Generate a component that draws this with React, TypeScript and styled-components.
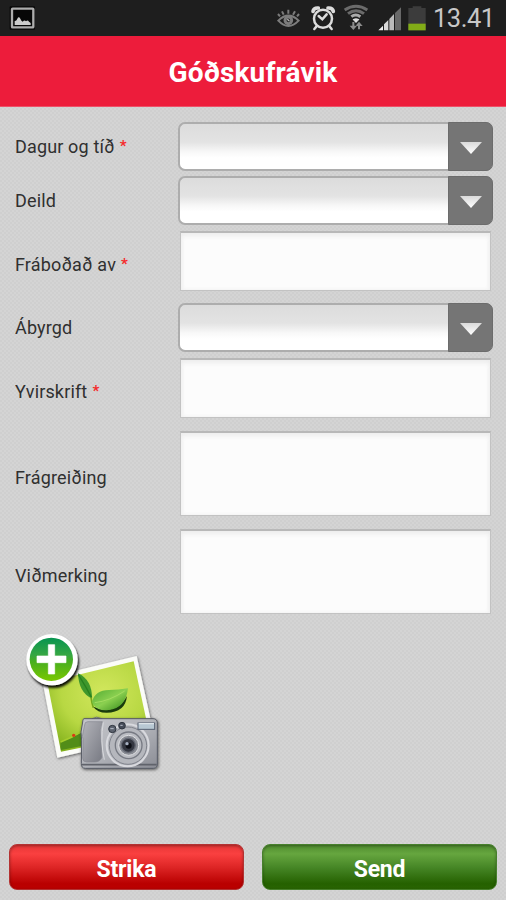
import React from 'react';
import styled, { createGlobalStyle } from 'styled-components';

const GlobalStyle = createGlobalStyle`
  * { box-sizing: border-box; }
  body { margin: 0; font-family: Roboto, sans-serif; }
`;

const Screen = styled.div`
  width: 506px;
  height: 900px;
  display: flex;
  flex-direction: column;
  overflow: hidden;
  background: repeating-conic-gradient(#d4d4d4 0 25%, #cfcfcf 0 50%) 0 0 / 4px 4px;
`;

const StatusBar = styled.div`
  height: 36px;
  flex: none;
  display: flex;
  align-items: center;
  justify-content: space-between;
  padding: 0 11px 0 9px;
  background: #1e1e1e;
`;

const StatusIcons = styled.div`
  display: flex;
  align-items: center;
`;

const Clock = styled.span`
  width: 61px;
  margin-left: 5px;
  margin-right: 1px;
  font-size: 25.5px;
  line-height: 36px;
  letter-spacing: -0.5px;
  color: #c8c8c8;
  white-space: nowrap;
`;

const Header = styled.h1`
  height: 71px;
  flex: none;
  margin: 0;
  display: flex;
  align-items: center;
  justify-content: center;
  padding-top: 3px;
  background: #ed1c3b;
  border-bottom: 1px solid #ee5068;
  color: #fff;
  font-size: 28px;
  font-weight: 700;
  letter-spacing: 0.15px;
`;

const Form = styled.form`
  flex: none;
  padding: 15px 13px 0 15px;
`;

const Row = styled.div<{ $gap: number }>`
  display: grid;
  grid-template-columns: 163px 315px;
  align-items: center;
  margin-bottom: ${(p) => p.$gap}px;
`;

const Label = styled.label<{ $drop: number }>`
  font-size: 18px;
  line-height: 22px;
  color: #303030;
  padding-top: ${(p) => p.$drop}px;
  letter-spacing: 0.15px;
`;

const Required = styled.span`
  margin-left: 5px;
  font-size: 15px;
  font-weight: 700;
  line-height: 1;
  vertical-align: 2px;
  color: #f52a2a;
`;

const Select = styled.div`
  height: 49px;
  display: flex;
  border: 2px solid #adadad;
  border-right: 0;
  border-radius: 7px;
  background: linear-gradient(#dcdcdc, #e3e3e3 40%, #f8f8f8 62%, #fff 75%);
`;

const SelectArrow = styled.div`
  width: 45px;
  margin: -2px 0 -2px auto;
  display: flex;
  align-items: center;
  justify-content: center;
  padding-top: 3px;
  border: 1px solid #6c6c6c;
  border-radius: 0 7px 7px 0;
  background: #757575;
`;

const TextBox = styled.div<{ $height: number }>`
  height: ${(p) => p.$height}px;
  margin: 0 2px;
  border: 1px solid #c2c2c2;
  border-top: 2px solid #b8b8b8;
  background: #fcfcfc;
  box-shadow: inset 0 3px 5px #ededed, inset 0 0 4px #f0f0f0;
`;

const PhotoButton = styled.div`
  width: 180px;
  height: 160px;
  margin-top: 6px;
  flex: none;
`;

const Actions = styled.div`
  margin-top: auto;
  display: grid;
  grid-template-columns: 235px 235px;
  gap: 18px;
  padding: 0 9px 10px;
`;

const ActionButton = styled.button<{ $tone: 'red' | 'green' }>`
  height: 46px;
  padding: 4px 0 0;
  border: 1px solid ${(p) => (p.$tone === 'red' ? '#b33232' : '#47802c')};
  border-radius: 8px;
  background: ${(p) =>
    p.$tone === 'red'
      ? 'linear-gradient(#e63636, #fa4040 20%, #dc2424 52%, #b90000 88%, #bc0000)'
      : 'linear-gradient(#4f8c2e, #66a63f 20%, #458525 52%, #256100 88%, #296503)'};
  box-shadow: inset 0 1px 3px rgba(0, 0, 0, 0.35), 0 0 1px #ddd;
  color: #fff;
  font: 700 23px Roboto, sans-serif;
  letter-spacing: -0.2px;
`;

const GalleryIcon = () => (
  <svg width="27" height="26" viewBox="0 0 81 78">
    <rect x="2" y="4" width="76" height="70" rx="3" fill="#070707" />
    <rect x="9" y="11" width="64" height="56" rx="2" fill="none" stroke="#adadad" strokeWidth="7" />
    <path d="M17 60V48q5 1 8-7 4-8 9 0 3 7 7 9 6-6 10-1 5-5 9 1l5 4v6z" fill="#ccc" />
  </svg>
);

const StatusGlyphs = () => (
  <svg width="162" height="36" viewBox="0 0 486 108">
    <g fill="none" stroke="#7c7c7c" strokeWidth="6">
      <path d="M37 62q30-30 61 0-31 32-61 0z" />
      <circle cx="67" cy="61" r="10" strokeWidth="9" />
      <path d="M67 29v12M48 34l5 10M87 34l-6 10M36 42l6 7M99 42l-6 7" />
      <path d="M64 58l6 5" stroke="#bbb" strokeWidth="4" />
    </g>
    <g fill="none" stroke="#dcdcdc" strokeWidth="7.5" strokeLinecap="round">
      <circle cx="171" cy="56" r="27" />
      <path d="M158 48l11 10 13-15M151 80l-6 7M191 80l6 7" />
      <path d="M141 34q2-11 16-10M186 24q14-1 16 10" strokeWidth="11" />
    </g>
    <g fill="none" stroke="#6b6b6b" strokeWidth="9">
      <path d="M236 30q34-22 68 0M246 41q24-18 48 0" />
      <path d="M256 50q13-10 27 0" stroke="#aaa" />
      <path d="M263 59q7-4 14 0l-7 7z" fill="#ddd" stroke="#ddd" strokeWidth="4" />
      <path d="M262 66v16M279 88V72" stroke="#8c8c8c" strokeWidth="6" />
      <path d="M251 77h22l-11 13zM268 78h22l-11-13z" fill="#8c8c8c" stroke="none" />
    </g>
    <path d="M337 91l14-14v14z" fill="#eee" />
    <path d="M354 91V73l13-13v31z" fill="#d8d8d8" />
    <path d="M370 91V57l14-15v49z" fill="#bbb" />
    <path d="M387 91V39l18-17v69z" fill="#686868" />
    <path d="M427 24h13v-5h26v5h13v67h-52z" fill="#3c3c3c" />
    <path d="M427 71h52v20h-52z" fill="#82ac17" />
  </svg>
);

const ArrowIcon = () => (
  <svg width="24" height="14" viewBox="0 0 24 14">
    <defs>
      <linearGradient id="arrow" x2="0" y2="1">
        <stop stopColor="#dadada" />
        <stop offset="1" stopColor="#fff" />
      </linearGradient>
    </defs>
    <path d="M1 1h22L12 13z" fill="url(#arrow)" />
  </svg>
);

const AddPhotoIcon = () => (
  <svg width="180" height="160" viewBox="0 0 540 480">
    <defs>
      <radialGradient id="photo" cx=".55" cy=".35" r=".75">
        <stop stopColor="#d2e75d" />
        <stop offset=".55" stopColor="#b8d843" />
        <stop offset="1" stopColor="#7eae18" />
      </radialGradient>
      <linearGradient id="leaf" x1="0" x2="1" y2="1">
        <stop stopColor="#50aa31" />
        <stop offset=".5" stopColor="#8bd050" />
        <stop offset="1" stopColor="#318719" />
      </linearGradient>
      <linearGradient id="badge" x2="0" y2="1">
        <stop stopColor="#079451" />
        <stop offset=".4" stopColor="#36a743" />
        <stop offset=".55" stopColor="#48ae20" />
        <stop offset="1" stopColor="#79c800" />
      </linearGradient>
      <linearGradient id="body" x2="1" y2="1">
        <stop stopColor="#c4c5ca" />
        <stop offset=".5" stopColor="#b1b3b9" />
        <stop offset="1" stopColor="#8b8d95" />
      </linearGradient>
      <linearGradient id="grip" x2="1" y2="1">
        <stop stopColor="#b3b4ba" />
        <stop offset="1" stopColor="#787a83" />
      </linearGradient>
      <filter id="shade" x="-20%" y="-20%" width="140%" height="150%">
        <feDropShadow dx="2" dy="3" stdDeviation="4" floodOpacity=".6" />
      </filter>
      <filter id="badgeShade" x="-20%" y="-20%" width="140%" height="150%">
        <feDropShadow dx="4" dy="8" stdDeviation="3" floodOpacity=".95" />
      </filter>
    </defs>
    <g filter="url(#shade)">
      <path d="M126 176L410 108l52 238-290 67z" fill="#fbfcf8" />
    </g>
    <path d="M142 187L401 124l47 217-265 54z" fill="url(#photo)" />
    <path d="M183 390q-4-22 0-24 35-14 67-31v42z" fill="#528d18" />
    <path d="M182 366q34-12 66-34" fill="none" stroke="#a5cd2c" strokeWidth="5" />
    <circle cx="221" cy="346" r="5" fill="#da3a16" />
    <path d="M234 160q43 20 42 76-40-18-42-76z" fill="#3e972c" />
    <path d="M235 164q22 35 40 69" fill="none" stroke="#28801f" strokeWidth="4" />
    <path d="M273 232q2 15 7 31" fill="none" stroke="#73a91e" strokeWidth="5" />
    <path d="M280 260q66 28 101-32-5 50-61 50-29 0-40-18z" fill="#193b0d" />
    <path d="M276 246q9-36 51-36 29 0 57-5-7 60-58 65-30 4-46-15z" fill="url(#leaf)" />
    <path d="M284 248q45-5 90-35" fill="none" stroke="#a3dc60" strokeWidth="3" />
    <g filter="url(#badgeShade)">
      <circle cx="156" cy="119" r="77" fill="#fff" />
    </g>
    <circle cx="154" cy="118" r="65" fill="url(#badge)" />
    <path d="M145 74h19v34h34v20h-34v34h-19v-34h-34v-20h34z" fill="#fff" stroke="#fff" strokeWidth="2" />
    <g filter="url(#shade)">
      <path d="M276 296q13-9 30 0z" fill="#9ea1a8" stroke="#595c66" strokeWidth="2" />
      <path d="M252 296h207q13 0 13 13v123q0 13-11 13H256q-12 0-12-14l1-70-2-25 5-30q0-10 4-10z" fill="url(#body)" stroke="#575b65" strokeWidth="3" />
    </g>
    <path d="M254 315q0-10 10-10h43q-10 23-5 51l4 56q-6 14-22 14h-24q-12 0-12-12l2-55-3-10z" fill="url(#grip)" stroke="#85878f" strokeWidth="2" />
    <path d="M246 434h224" stroke="#60636b" strokeWidth="5" />
    <path d="M310 307q-10 55 3 112" fill="none" stroke="#d8d9dd" strokeWidth="3" />
    <circle cx="383" cy="376" r="63" fill="#b5b7bd" stroke="#d8d9de" strokeWidth="6" />
    <circle cx="384" cy="377" r="56" fill="none" stroke="#80838c" strokeWidth="3" />
    <circle cx="386" cy="376" r="40" fill="#babcc2" stroke="#777a83" strokeWidth="4" />
    <circle cx="386" cy="376" r="30" fill="#888b93" stroke="#e0e1e4" strokeWidth="3" />
    <circle cx="385" cy="376" r="21" fill="#343741" stroke="#656974" strokeWidth="4" />
    <circle cx="386" cy="377" r="9" fill="#0c0e15" />
    <circle cx="381" cy="371" r="5" fill="#a7b1c2" />
    <circle cx="337" cy="327" r="11" fill="#5c626e" stroke="#303640" strokeWidth="3" />
    <circle cx="366" cy="317" r="10" fill="#454b58" stroke="#303640" strokeWidth="3" />
    <path d="M331 326h10M361 316h7" stroke="#bbc1cc" strokeWidth="3" />
    <rect x="414" y="309" width="50" height="19" fill="#b8c8d3" stroke="#555f70" strokeWidth="3" />
    <path d="M416 311h46" stroke="#eef3f6" strokeWidth="3" />
  </svg>
);

type Field = {
  label: string;
  required?: boolean;
  kind: 'select' | 'text';
  height?: number;
  gap: number;
};

const fields: Field[] = [
  { label: 'Dagur og tíð', required: true, kind: 'select', gap: 5 },
  { label: 'Deild', kind: 'select', gap: 6 },
  { label: 'Fráboðað av', required: true, kind: 'text', height: 60, gap: 12 },
  { label: 'Ábyrgd', kind: 'select', gap: 6 },
  { label: 'Yvirskrift', required: true, kind: 'text', height: 60, gap: 13 },
  { label: 'Frágreiðing', kind: 'text', height: 85, gap: 13 },
  { label: 'Viðmerking', kind: 'text', height: 85, gap: 0 },
];

export default function App() {
  return (
    <>
      <GlobalStyle />
      <Screen>
        <StatusBar>
          <GalleryIcon />
          <StatusIcons>
            <StatusGlyphs />
            <Clock>13.41</Clock>
          </StatusIcons>
        </StatusBar>
        <Header>Góðskufrávik</Header>
        <Form>
          {fields.map((f) => (
            <Row key={f.label} $gap={f.gap}>
              <Label $drop={f.kind === 'text' ? 8 : 1}>
                {f.label}
                {f.required && <Required>*</Required>}
              </Label>
              {f.kind === 'select' ? (
                <Select>
                  <SelectArrow>
                    <ArrowIcon />
                  </SelectArrow>
                </Select>
              ) : (
                <TextBox $height={f.height ?? 60} />
              )}
            </Row>
          ))}
        </Form>
        <PhotoButton>
          <AddPhotoIcon />
        </PhotoButton>
        <Actions>
          <ActionButton $tone="red">Strika</ActionButton>
          <ActionButton $tone="green">Send</ActionButton>
        </Actions>
      </Screen>
    </>
  );
}
